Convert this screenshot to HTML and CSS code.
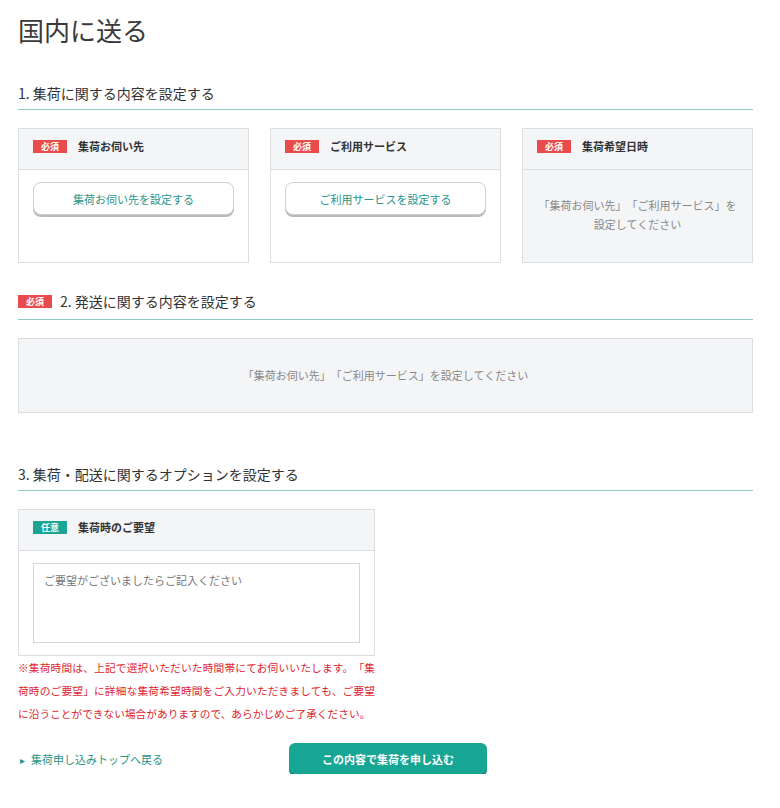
FILE: index.html
```html
<!DOCTYPE html>
<html lang="ja">
<head>
  <meta charset="UTF-8">
  <meta name="viewport" content="width=device-width, initial-scale=1.0">
  <title>国内に送る</title>
  <link rel="stylesheet" href="styles.css">
</head>
<body>
  <div class="page">
    <h1 class="page-title">国内に送る</h1>

    <h2 class="section-title">1. 集荷に関する内容を設定する</h2>
    <div class="cards">
      <div class="card">
        <div class="card-head"><span class="badge">必須</span>集荷お伺い先</div>
        <div class="card-body">
          <button class="select-button">集荷お伺い先を設定する</button>
        </div>
      </div>
      <div class="card">
        <div class="card-head"><span class="badge">必須</span>ご利用サービス</div>
        <div class="card-body">
          <button class="select-button">ご利用サービスを設定する</button>
        </div>
      </div>
      <div class="card disabled">
        <div class="card-head"><span class="badge">必須</span>集荷希望日時</div>
        <div class="card-body message">「集荷お伺い先」「ご利用サービス」を<br>設定してください</div>
      </div>
    </div>

    <h2 class="section-title second"><span class="badge">必須</span>2. 発送に関する内容を設定する</h2>
    <div class="wide-box">「集荷お伺い先」「ご利用サービス」を設定してください</div>

    <h2 class="section-title third">3. 集荷・配送に関するオプションを設定する</h2>
    <div class="option">
      <div class="card">
        <div class="card-head"><span class="badge optional">任意</span>集荷時のご要望</div>
        <div class="card-body textarea-body">
          <textarea class="request" placeholder="ご要望がございましたらご記入ください"></textarea>
        </div>
      </div>
      <p class="note">※集荷時間は、上記で選択いただいた時間帯にてお伺いいたします。「集荷時のご要望」に詳細な集荷希望時間をご入力いただきましても、ご要望に沿うことができない場合がありますので、あらかじめご了承ください。</p>
    </div>

    <div class="footer">
      <a class="back-link" href="#"><span class="arrow">▸</span>集荷申し込みトップへ戻る</a>
      <button class="submit-button">この内容で集荷を申し込む</button>
    </div>
  </div>
</body>
</html>
```

FILE: styles.css
```css
body {
  margin: 0;
  font-family: "Noto Sans CJK JP", "Noto Sans", sans-serif;
  color: #333;
  background-color: #fff;
  text-spacing-trim: space-all;
}
.page {
  width: 735px;
  padding: 12px 0 0 18px;
}
.page-title {
  margin: 0;
  font-size: 26px;
  line-height: 36px;
  font-weight: 400;
  color: #3a3a3a;
}
.section-title {
  margin: 35px 0 0;
  padding-bottom: 6px;
  font-size: 14px;
  line-height: 20px;
  font-weight: 400;
  border-bottom: 1px solid #8fcbc4;
  display: flex;
  align-items: center;
}
.section-title.second {
  margin-top: 28px;
  padding-bottom: 8px;
}
.section-title.third {
  margin-top: 51px;
}
.section-title .badge {
  margin-right: 8px;
}
.badge {
  display: inline-block;
  width: 34px;
  height: 13px;
  line-height: 13px;
  background-color: #e94b4d;
  color: #fff;
  font-size: 9px;
  font-weight: 700;
  text-align: center;
  margin-right: 11px;
}
.badge.optional {
  background-color: #1aa595;
}
.cards {
  display: grid;
  grid-template-columns: repeat(3, 1fr);
  gap: 21px;
  margin-top: 18px;
}
.card {
  border: 1px solid #dcdde0;
  background-color: #fff;
  display: flex;
  flex-direction: column;
}
.card-head {
  height: 41px;
  box-sizing: border-box;
  padding: 10px 14px 0;
  display: flex;
  align-items: flex-start;
  background-color: #f4f5f7;
  border-bottom: 1px solid #dcdde0;
  font-size: 11px;
  line-height: 15px;
  font-weight: 700;
  color: #333;
}
.card-head .badge {
  margin-top: 1px;
}
.card-body {
  height: 92px;
  padding: 12px 14px 0;
  box-sizing: border-box;
}
.card.disabled {
  background-color: #f4f5f7;
}
.card-body.message {
  padding: 0 14px 2px;
  display: flex;
  align-items: center;
  justify-content: center;
  text-align: center;
  font-size: 11px;
  line-height: 19px;
  color: #888;
}
.select-button {
  width: 100%;
  height: 33px;
  border: 1px solid #cfd0d3;
  border-radius: 8px;
  background-color: #fff;
  box-shadow: 0 2px 0 #b8babd;
  font-family: inherit;
  font-size: 11px;
  color: #2a9488;
  cursor: pointer;
}
.wide-box {
  margin-top: 18px;
  height: 75px;
  padding-bottom: 2px;
  box-sizing: border-box;
  border: 1px solid #dcdde0;
  background-color: #f4f5f7;
  display: flex;
  align-items: center;
  justify-content: center;
  font-size: 11px;
  color: #888;
}
.option {
  width: 357px;
  margin-top: 18px;
}
.textarea-body {
  height: auto;
  padding: 12px 14px 12px;
}
.request {
  display: block;
  width: 100%;
  height: 80px;
  box-sizing: border-box;
  border: 1px solid #d6d7da;
  padding: 8px 10px;
  font-family: inherit;
  font-size: 11px;
  color: #333;
  resize: none;
}
.request::placeholder {
  color: #777;
}
.note {
  margin: 0;
  font-size: 10.7px;
  line-height: 23px;
  color: #e0242f;
  text-align: justify;
}
.footer {
  margin-top: 18px;
  display: flex;
  align-items: center;
}
.back-link {
  width: 269px;
  padding-left: 2px;
  font-size: 11px;
  color: #2a9488;
  text-decoration: none;
}
.arrow {
  font-size: 10px;
  margin-right: 6px;
  color: #2a9488;
}
.submit-button {
  width: 198px;
  height: 31px;
  border: none;
  border-radius: 6px;
  background-color: #17a594;
  box-shadow: 0 2px 0 #137d70;
  color: #fff;
  font-family: inherit;
  font-size: 11px;
  font-weight: 700;
  cursor: pointer;
}
```
